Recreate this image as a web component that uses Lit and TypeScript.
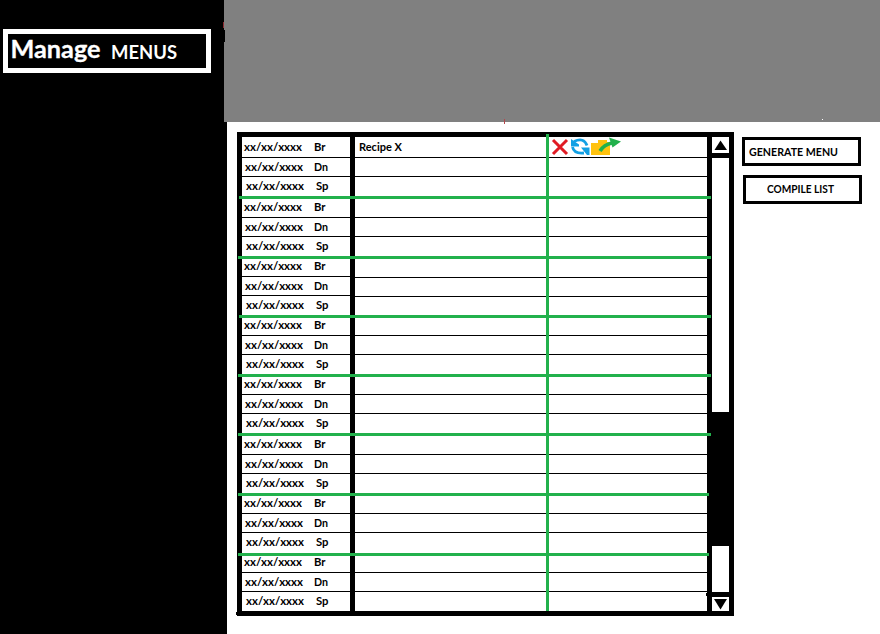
import { LitElement, html, svg, css } from "lit";
import { customElement } from "lit/decorators.js";

// A line of text set on a baseline and fitted to a width.
const line = (t: string, x: number, y: number, w: number, size: number) =>
  svg`<text x=${x} y=${y} font-size=${size} textLength=${w} lengthAdjust="spacingAndGlyphs">${t}</text>`;

// Heights of the three meal rows of each day, rule included.
const days = [
  { rows: [21, 19, 19], shift: 0, start: 2, end: 711 },
  { rows: [19, 19, 19], shift: 0, start: 1, end: 711 },
  { rows: [18, 19, 19], shift: 1, start: 2, end: 711 },
  { rows: [18, 19, 19], shift: 0, start: 1, end: 711 },
  { rows: [18, 19, 19], shift: 0, start: 1, end: 711 },
  { rows: [19, 19, 19], shift: 0, start: 1, end: 709 },
  { rows: [18, 19, 20], shift: 0, start: 1, end: 709 },
  { rows: [17, 19, 19], shift: 0, start: 1, end: 709 },
];
const meals = ["Br", "Dn", "Sp"];

@customElement("app-root")
export class AppRoot extends LitElement {
  static styles = css`
    :host { display: block; width: 880px; height: 634px; background: #fff; overflow: hidden;
      font-family: Lato, "Open Sans", sans-serif; font-weight: 700; }
    * { box-sizing: border-box; }
    svg { display: block; overflow: visible; font-weight: 700; }
    .page { display: grid; grid-template-columns: 227px 1fr; height: 634px; }
    .side { background: #000; padding: 29px 0 0 3px; }
    .title { width: 208px; height: 44px; border: 5px solid #fff; fill: #fff; }
    .heavy { stroke: #fff; stroke-width: .3px; }
    .main { display: flex; flex-direction: column; position: relative; }
    .banner { height: 122px; background: #808080; margin-left: -3px; position: relative; flex: none; }
    .notch, .red1, .red2, .dot { position: absolute; }
    .notch { left: 0; top: 30px; width: 1px; height: 12px; background: #000; }
    .red1 { left: -1px; top: 22px; width: 1px; height: 6px; background: #8c2a30; }
    .red2 { left: 280px; top: 119px; width: 1px; height: 5px; background: #b5474c; }
    .dot { left: 598px; top: 119px; width: 1px; height: 1px; background: #fff; }
    .body { display: flex; padding: 10px 0 0 10px; }
    .table { display: flex; width: 497px; height: 484px; border: 5px solid #000; position: relative; }
    .grid { width: 465px; }
    .row { display: flex; }
    .date { width: 108px; }
    .gap { width: 5px; background: #000; flex: none; }
    .cell { flex: 1; }
    .date, .cell { border-bottom: 1px solid #000; }
    .row.last > * { border-bottom: 0; }
    .rule { height: 3px; background: #22b14c; position: relative; }
    .bar { width: 22px; border-left: 5px solid #000; }
    .btn { height: 16px; }
    .bar .sep { height: 5px; background: #000; }
    .track { height: 254px; }
    .thumb { height: 134px; background: #000; }
    .rest { height: 46px; }
    .vline { position: absolute; left: 304px; top: -3px; width: 3px; height: 477px; background: #22b14c; }
    .nub { position: absolute; background: #000; width: 1px; height: 3px; }
    .n1 { left: -6px; top: 475px; }
    .n2 { left: 464px; top: 456px; }
    .actions { display: flex; flex-direction: column; gap: 9px; padding: 5px 0 0 8px; }
    .action { width: 119px; height: 29px; border: 3px solid #000; }
    .action.b { margin-left: 1px; }
  `;

  day(d: (typeof days)[number], i: number) {
    return html`${d.rows.map((h, r) => {
      const rise = r === 0 ? h - 7 : r === 1 ? h - 6 : 13;
      const first = i === 0 && r === 0;
      return html`<div class="row ${r === 2 ? "last" : ""}" style="height:${h}px">
        <div class="date"><svg width="108" height="10">
          ${line("xx/xx/xxxx", 2 + r, rise, 58, 12)}
          ${line(meals[r], r === 2 ? 74 : 72, rise, r === 0 ? 11.5 : r === 1 ? 14 : 12.5, 11.9)}
        </svg></div>
        <div class="gap"></div>
        <div class="cell" style=${d.shift && r < 2 ? "position:relative;top:1px" : ""}>
          ${first ? this.recipe() : ""}
        </div>
      </div>`;
    })}
    ${i < 7 ? html`<div class="rule" style="margin-left:${d.start - 5}px;width:${d.end - 237 - d.start}px"></div>` : ""}`;
  }

  recipe() {
    return html`<svg width="352" height="18">
      ${line("Recipe X", 4, 14, 43, 11.9)}
      <path fill="none" stroke="#e01b24" stroke-width="3" d="M198 3L212 17M212 3L198 17"/>
      <g fill="none" stroke="#12a0e4" stroke-width="2.8">
        <path d="M219 4.500Q229 0 232 8.500"/><path d="M217.500 10Q219 17 229 16"/>
      </g>
      <path fill="#12a0e4" d="M216 2V9.500H224V7.500ZM226 10.500H234.500V18H232Z"/>
      <path fill="#ffc20e" d="M236 6H243V3H252V5H255V18H236Z"/>
      <path fill="none" stroke="#22b14c" stroke-width="3.600" d="M245 14Q249 7.500 257 6"/>
      <path fill="#22b14c" d="M254 .5L266 4.500L257.500 10.500Z"/>
    </svg>`;
  }

  render() {
    return html`<div class="page">
      <div class="side"><div class="title"><svg width="198" height="34">
        <g class="heavy">${line("Manage", 2.5, 23.5, 90, 24)}</g>${line("MENUS", 103, 25, 66, 18.4)}
      </svg></div></div>
      <div class="main">
        <div class="banner"><i class="notch"></i><i class="red1"></i><i class="red2"></i><i class="dot"></i></div>
        <div class="body">
          <div class="table">
            <div class="grid">${days.map((d, i) => this.day(d, i))}</div>
            <div class="bar">
              <div class="btn"><svg width="17" height="16"><path d="M8.500 3.500L15 13H2.500Z"/></svg></div>
              <div class="sep"></div>
              <div class="track"></div><div class="thumb"></div><div class="rest"></div>
              <div class="sep"></div>
              <div class="btn"><svg width="17" height="14"><path d="M2 2H15L8.500 12.500Z"/></svg></div>
            </div>
            <i class="vline"></i><i class="nub n1"></i><i class="nub n2"></i>
          </div>
          <div class="actions">
            <div class="action"><svg width="113" height="23">${line("GENERATE MENU", 4, 16, 89, 11.8)}</svg></div>
            <div class="action b"><svg width="113" height="23">${line("COMPILE LIST", 21, 15, 67, 11.8)}</svg></div>
          </div>
        </div>
      </div>
    </div>`;
  }
}
